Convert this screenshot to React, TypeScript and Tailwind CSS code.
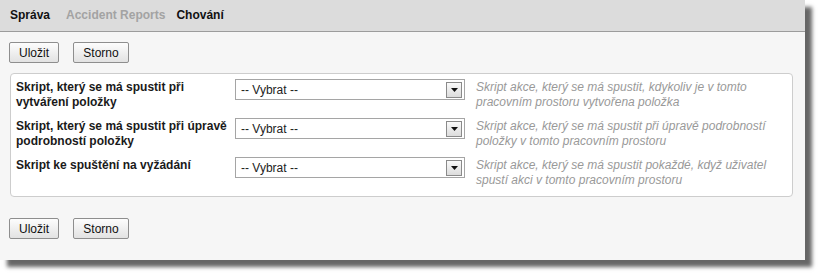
const rows = [
  {
    label: "Skript, který se má spustit při vytváření položky",
    desc: "Skript akce, který se má spustit, kdykoliv je v tomto pracovním prostoru vytvořena položka",
  },
  {
    label: "Skript, který se má spustit při úpravě podrobností položky",
    desc: "Skript akce, který se má spustit při úpravě podrobností položky v tomto pracovním prostoru",
  },
  {
    label: "Skript ke spuštění na vyžádání",
    desc: "Skript akce, který se má spustit pokaždé, když uživatel spustí akci v tomto pracovním prostoru",
  },
]

const Btn = ({ label, w }: { label: string; w: string }) =>
  <button className={`${w} h-[21px] border border-[#8e8e8e] rounded-[2px] bg-gradient-to-b from-[#fdfdfd] to-[#e2e2e2] text-[12px] text-[#111] leading-none flex justify-center items-center`}>
    {label}
  </button>

const Buttons = () =>
  <div className="flex items-center gap-[14px] pl-[9px]">
    <Btn label="Uložit" w="w-[50px]" />
    <Btn label="Storno" w="w-[56px]" />
  </div>

const Select = () =>
  <div className="w-[230px] h-[21px] shrink-0 border border-[#a5a5a5] bg-white flex items-center justify-between pl-[5px] pr-[2px]">
    <span className="text-[12px] text-[#222]">-- Vybrat --</span>
    <div className="w-[16px] h-[16px] border border-[#8a8a8a] bg-gradient-to-b from-[#fafafa] to-[#dcdcdc] flex justify-center items-center">
      <svg width="7" height="4" viewBox="0 0 7 4"><path d="M0 0h7L3.5 4z" fill="#111" /></svg>
    </div>
  </div>

export default function App() {
  return (
    <div className="w-[819px] h-[274px] bg-white font-['Liberation_Sans',Arial,sans-serif]">
      <div className="w-[805px] h-[260px] bg-[#f6f6f6] shadow-[7px_7px_4px_rgba(0,0,0,0.6)] flex flex-col">
        <div className="h-[32px] shrink-0 bg-[#dcdcdc] border-b border-[#9c9c9c] flex items-center pl-[10px] pb-[1px] text-[12px] font-bold">
          <span className="text-[#111]">Správa</span>
          <span className="ml-[16px] text-[#a3a3a3]">Accident Reports</span>
          <span className="ml-[11px] text-[#111]">Chování</span>
        </div>
        <div className="pt-[10px]">
          <Buttons />
        </div>
        <div className="mt-[10px] ml-[10px] w-[783px] h-[124px] bg-white border border-[#cdcdcd] rounded-[4px] pt-[5px] pl-[5px] flex flex-col gap-[9px]">
          {rows.map(r =>
            <div key={r.label} className="flex items-start h-[30px]">
              <div className="w-[214px] shrink-0 text-[12px] font-bold text-[#1a1a1a] leading-[15px] pt-[1px]">{r.label}</div>
              <div className="ml-[5px]"><Select /></div>
              <div className="ml-[11px] w-[310px] text-[12px] italic text-[#999] leading-[15px] pt-[1px]">{r.desc}</div>
            </div>
          )}
        </div>
        <div className="pt-[21px]">
          <Buttons />
        </div>
      </div>
    </div>
  )
}
